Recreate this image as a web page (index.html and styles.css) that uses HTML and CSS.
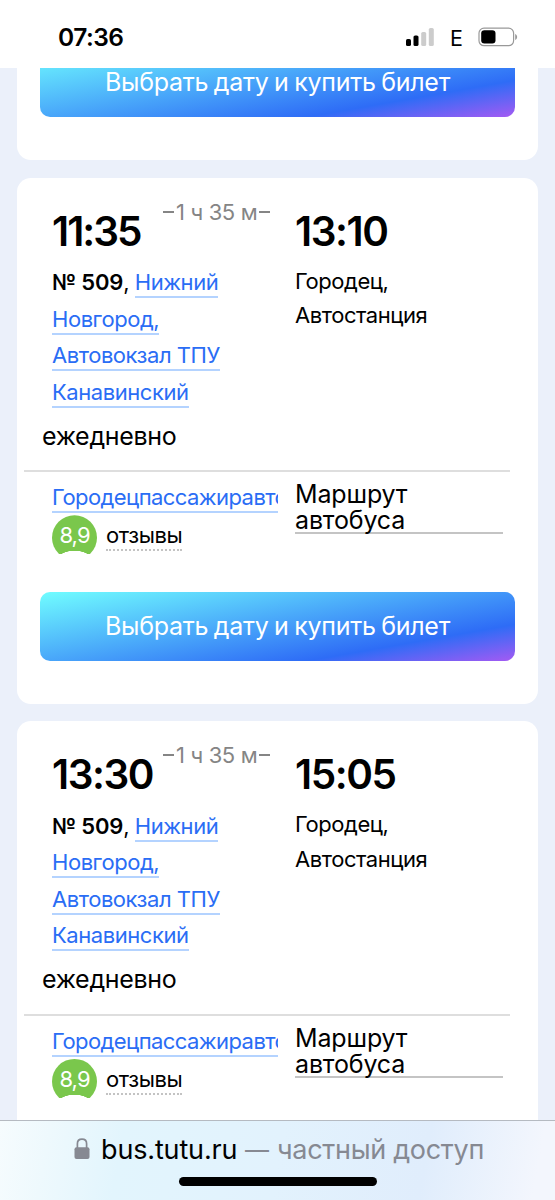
FILE: index.html
```
<!DOCTYPE html>
<html lang="ru">
<head>
<meta charset="utf-8">
<title>bus.tutu.ru</title>
<link rel="stylesheet" href="styles.css">
</head>
<body>
<div class="phone">
  <header class="status">
    <span class="clock">07:36</span>
    <span class="indicators">
      <svg class="signal" width="28" height="18" viewBox="0 0 28 18">
        <rect x="0" y="11" width="5" height="7" rx="1.6" fill="#000"/>
        <rect x="7.5" y="7.5" width="5" height="10.5" rx="1.6" fill="#000"/>
        <rect x="15.2" y="4" width="5" height="14" rx="1.6" fill="#ccc"/>
        <rect x="22.8" y="0" width="5" height="18" rx="1.6" fill="#ccc"/>
      </svg>
      <span class="network">E</span>
      <svg class="battery" width="40" height="20" viewBox="0 0 40 20">
        <rect x="1" y="1.1" width="34.6" height="17.6" rx="5" fill="none" stroke="#999" stroke-width="1.2"/>
        <rect x="3.2" y="3.2" width="14.3" height="13.2" rx="3.2" fill="#000"/>
        <path d="M37.2 7v6c1.2-.5 1.9-1.600 1.900-3s-.7-2.500-1.900-3z" fill="#999"/>
      </svg>
    </span>
  </header>
  <main class="feed">
    <section class="card card-tail">
      <div class="buy"><span>Выбрать дату и купить билет</span></div>
    </section>

    <section class="card">
      <div class="trip">
        <div class="from">
          <div class="times"><span class="time tight">11:35</span><span class="duration"><i></i>1 ч 35 м<i></i></span></div>
          <div class="place"><b>№ 509</b>, <a>Нижний</a><br><a>Новгород,</a><br><a>Автовокзал ТПУ</a><br><a>Канавинский</a></div>
        </div>
        <div class="to">
          <div class="times"><span class="time">13:10</span></div>
          <div class="station">Городец,<br>Автостанция</div>
        </div>
      </div>
      <div class="days">ежедневно</div>
      <div class="info">
        <div class="carrier">
          <div class="company"><a>Городецпассажиравто</a></div>
          <div class="reviews">
            <div class="score"><span>8,9</span></div>
            <span class="reviews-link">отзывы</span>
          </div>
        </div>
        <div class="route">Маршрут<br>автобуса</div>
      </div>
      <div class="buy"><span>Выбрать дату и купить билет</span></div>
    </section>

    <section class="card">
      <div class="trip">
        <div class="from">
          <div class="times"><span class="time">13:30</span><span class="duration"><i></i>1 ч 35 м<i></i></span></div>
          <div class="place"><b>№ 509</b>, <a>Нижний</a><br><a>Новгород,</a><br><a>Автовокзал ТПУ</a><br><a>Канавинский</a></div>
        </div>
        <div class="to">
          <div class="times"><span class="time">15:05</span></div>
          <div class="station">Городец,<br>Автостанция</div>
        </div>
      </div>
      <div class="days">ежедневно</div>
      <div class="info">
        <div class="carrier">
          <div class="company"><a>Городецпассажиравто</a></div>
          <div class="reviews">
            <div class="score"><span>8,9</span></div>
            <span class="reviews-link">отзывы</span>
          </div>
        </div>
        <div class="route">Маршрут<br>автобуса</div>
      </div>
    </section>
  </main>
  <footer class="browser-bar">
    <div class="address">
      <svg class="lock" width="16" height="22" viewBox="0 0 16 22">
        <path d="M3.400 10V5.800C3.400 3 5.200 1.200 8 1.200s4.600 1.800 4.600 4.600V10" fill="none" stroke="#868992" stroke-width="1.700"/>
        <rect x="0.500" y="9.300" width="15" height="11.700" rx="2" fill="#868992"/>
      </svg>
      <span class="host">bus.tutu.ru</span>
      <span class="mode"><span class="dash">—</span>частный доступ</span>
    </div>
    <div class="home"></div>
  </footer>
</div>
</body>
</html>
```

FILE: styles.css
```
* { box-sizing: border-box; }

body {
  margin: 0;
  font-family: Inter, "Liberation Sans", sans-serif;
  color: #000;
}

.phone {
  display: flex;
  flex-direction: column;
  width: 555px;
  height: 1200px;
  overflow: hidden;
  background: #ebf0fa;
}

/* Status bar */
.status {
  flex: none;
  display: flex;
  justify-content: space-between;
  height: 68px;
  padding: 0 37px 0 58px;
  background: #fff;
}
.clock {
  padding-top: 22px;
  font-size: 24.500px;
  line-height: 30px;
  font-weight: 600;
  letter-spacing: -0.5px;
}
.indicators { display: flex; align-items: flex-start; }
.signal { margin-top: 28px; }
.network {
  width: 13px;
  margin: 24px 15px 0 16px;
  font-size: 21.500px;
  line-height: 28px;
}
.battery { margin-top: 27px; }

/* Feed of trips */
.feed {
  flex: 1;
  min-height: 0;
  overflow: hidden;
  display: flex;
  flex-direction: column;
  gap: 17.700px;
  padding: 0 17px;
}
.card {
  flex: none;
  height: 526px;
  padding: 0 23px;
  border-radius: 14px;
  background: #fff;
}
.card-tail {
  display: flex;
  flex-direction: column;
  justify-content: flex-end;
  height: 92px;
  padding-bottom: 43px;
  border-radius: 0 0 14px 14px;
}
.buy {
  flex: none;
  display: flex;
  justify-content: center;
  height: 69px;
  padding-top: 19px;
  border-radius: 10px;
  background: linear-gradient(170deg, #70fdff 0%, #2e6cf6 76%, #a45af3 100%);
  color: #fff;
  font-size: 25px;
  line-height: 30px;
  letter-spacing: -0.27px;
  word-spacing: -1.200px;
  white-space: nowrap;
}

.trip { display: flex; height: 236px; padding-left: 12px; }
.from { width: 243px; }
.times { display: flex; height: 86px; white-space: nowrap; }
.time {
  width: 111px;
  padding-top: 30px;
  font-size: 40.500px;
  line-height: 48px;
  font-weight: 600;
  letter-spacing: -1.450px;
}
.tight { letter-spacing: -2px; }
.duration {
  display: flex;
  align-items: center;
  gap: 2px;
  height: 28px;
  margin-top: 20px;
  font-size: 22px;
  letter-spacing: -0.35px;
  color: #858585;
}
.duration i { width: 11px; height: 2px; background: #858585; }

.place {
  padding-top: 0.600px;
  font-size: 22px;
  line-height: 36.400px;
  letter-spacing: -0.45px;
  white-space: nowrap;
}
.place b { font-weight: 600; letter-spacing: -0.2px; }
.place a, .company a {
  padding-bottom: 1px;
  color: #2a6df5;
  border-bottom: 2px solid #b4d3ff;
}
.station { font-size: 22px; line-height: 34.500px; letter-spacing: -0.45px; }

.days {
  height: 56.500px;
  padding: 7px 0 0 2px;
  font-size: 25px;
  line-height: 30px;
  letter-spacing: -0.3px;
}

/* Carrier and route */
.info {
  display: flex;
  height: 121.500px;
  margin: 0 5px 0 -16px;
  padding-left: 28px;
  border-top: 2px solid #dedede;
}
.carrier { width: 243px; }
.company {
  width: 226px;
  height: 43px;
  padding-top: 11px;
  overflow: hidden;
  font-size: 22px;
  line-height: 28px;
  letter-spacing: -0.57px;
  white-space: nowrap;
}
.reviews { display: flex; gap: 9px; }
.score {
  display: flex;
  justify-content: center;
  width: 45px;
  height: 39px;
  padding-top: 6px;
  background: radial-gradient(circle 28px at 22.500px 63.500px, #fff 27.500px, #7ac74c 28px);
  clip-path: circle(22.500px at 50% 22.500px);
  color: #fff;
  font-size: 22px;
  line-height: 28px;
  letter-spacing: -0.9px;
}
.reviews-link {
  height: 36px;
  padding-top: 6px;
  font-size: 22px;
  line-height: 28px;
  letter-spacing: -0.4px;
  border-bottom: 2px dotted #c3c3c3;
}
.route {
  width: 208px;
  height: 62px;
  padding-top: 9px;
  font-size: 25px;
  line-height: 26px;
  letter-spacing: -0.15px;
  border-bottom: 2px solid #c4c4c4;
}

/* Browser address bar */
.browser-bar {
  flex: none;
  display: flex;
  flex-direction: column;
  align-items: center;
  height: 80px;
  border-top: 1px solid #b5bac1;
  background: linear-gradient(100deg, #f6fcfe 0%, #eef9fd 9%, #e2f5fd 22%, #e2f2fd 50%, #e0edfc 76%, #f3f6fd 96%);
}
.address {
  display: flex;
  width: 407px;
  height: 56px;
  padding-top: 11px;
  font-size: 27px;
  line-height: 36px;
  white-space: nowrap;
}
.lock { flex: none; margin: 6px 11px 0 0; }
.host { flex: none; width: 144px; letter-spacing: -0.15px; }
.mode { display: flex; color: #868992; letter-spacing: -0.3px; }
.dash { width: 32px; font-size: 24px; }
.home { width: 198px; height: 9px; border-radius: 5px; background: #000; }
```
